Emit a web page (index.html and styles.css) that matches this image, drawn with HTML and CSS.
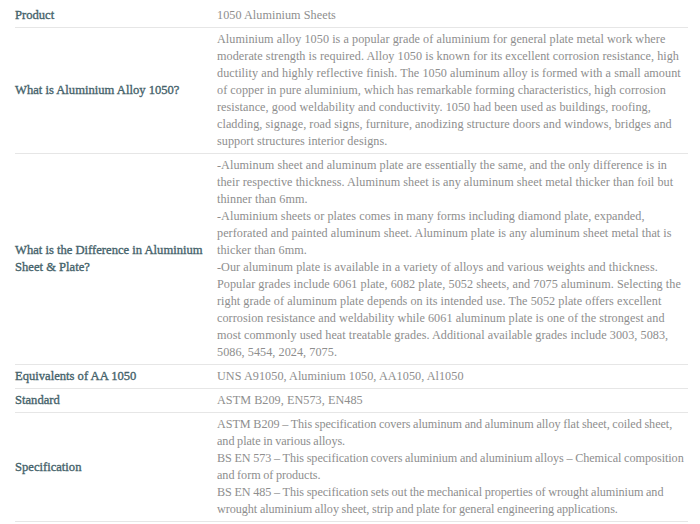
FILE: index.html
```html
<!DOCTYPE html>
<html>
<head>
<meta charset="utf-8">
<link rel="stylesheet" href="styles.css">
</head>
<body>
<table class="spec">
  <tbody>
    <tr>
      <th>Product</th>
      <td>1050 Aluminium Sheets</td>
    </tr>
    <tr>
      <th>What is Aluminium Alloy 1050?</th>
      <td>Aluminium alloy 1050 is a popular grade of aluminium for general plate metal work where moderate strength is required. Alloy 1050 is known for its excellent corrosion resistance, high ductility and highly reflective finish. The 1050 aluminum alloy is formed with a small amount of copper in pure aluminium, which has remarkable forming characteristics, high corrosion resistance, good weldability and conductivity. 1050 had been used as buildings, roofing, cladding, signage, road signs, furniture, anodizing structure doors and windows, bridges and support structures interior designs.</td>
    </tr>
    <tr>
      <th>What is the Difference in Aluminium Sheet &amp; Plate?</th>
      <td>-Aluminum sheet and aluminum plate are essentially the same, and the only difference is in their respective thickness. Aluminum sheet is any aluminum sheet metal thicker than foil but thinner than 6mm.<br>-Aluminium sheets or plates comes in many forms including diamond plate, expanded, perforated and painted aluminum sheet. Aluminum plate is any aluminum sheet metal that is thicker than 6mm.<br>-Our aluminum plate is available in a variety of alloys and various weights and thickness. Popular grades include 6061 plate, 6082 plate, 5052 sheets, and 7075 aluminum. Selecting the right grade of aluminum plate depends on its intended use. The 5052 plate offers excellent corrosion resistance and weldability while 6061 aluminum plate is one of the strongest and most commonly used heat treatable grades. Additional available grades include 3003, 5083, 5086, 5454, 2024, 7075.</td>
    </tr>
    <tr>
      <th>Equivalents of AA 1050</th>
      <td>UNS A91050, Aluminium 1050, AA1050, Al1050</td>
    </tr>
    <tr>
      <th>Standard</th>
      <td>ASTM B209, EN573, EN485</td>
    </tr>
    <tr>
      <th>Specification</th>
      <td class="tight">ASTM B209 – This specification covers aluminum and aluminum alloy flat sheet, coiled sheet, and plate in various alloys.<br>BS EN 573 – This specification covers aluminium and aluminium alloys – Chemical composition and form of products.<br>BS EN 485 – This specification sets out the mechanical properties of wrought aluminium and wrought aluminium alloy sheet, strip and plate for general engineering applications.</td>
    </tr>
  </tbody>
</table>
</body>
</html>
```
FILE: styles.css
```css
html, body {
  margin: 0;
  padding: 0;
  background: #ffffff;
}
body {
  padding: 4px 12px 0 15px;
  font-family: "Liberation Serif", "Times New Roman", serif;
  font-size: 12.5px;
  line-height: 17px;
}
.spec {
  width: 100%;
  border-collapse: collapse;
}
.spec th,
.spec td {
  padding: 3px 0;
  border-bottom: 1px solid #e6e6e6;
  vertical-align: middle;
  text-align: left;
}
.spec th {
  width: 194px;
  padding-right: 8px;
  font-size: 12.6px;
  font-weight: normal;
  color: #46636b;
  -webkit-text-stroke: 0.35px #46636b;
}
.spec td {
  font-size: 12.2px;
  letter-spacing: 0.05px;
  color: #8e8e8e;
}
.spec td.tight {
  letter-spacing: -0.06px;
  word-spacing: -0.3px;
}
```
